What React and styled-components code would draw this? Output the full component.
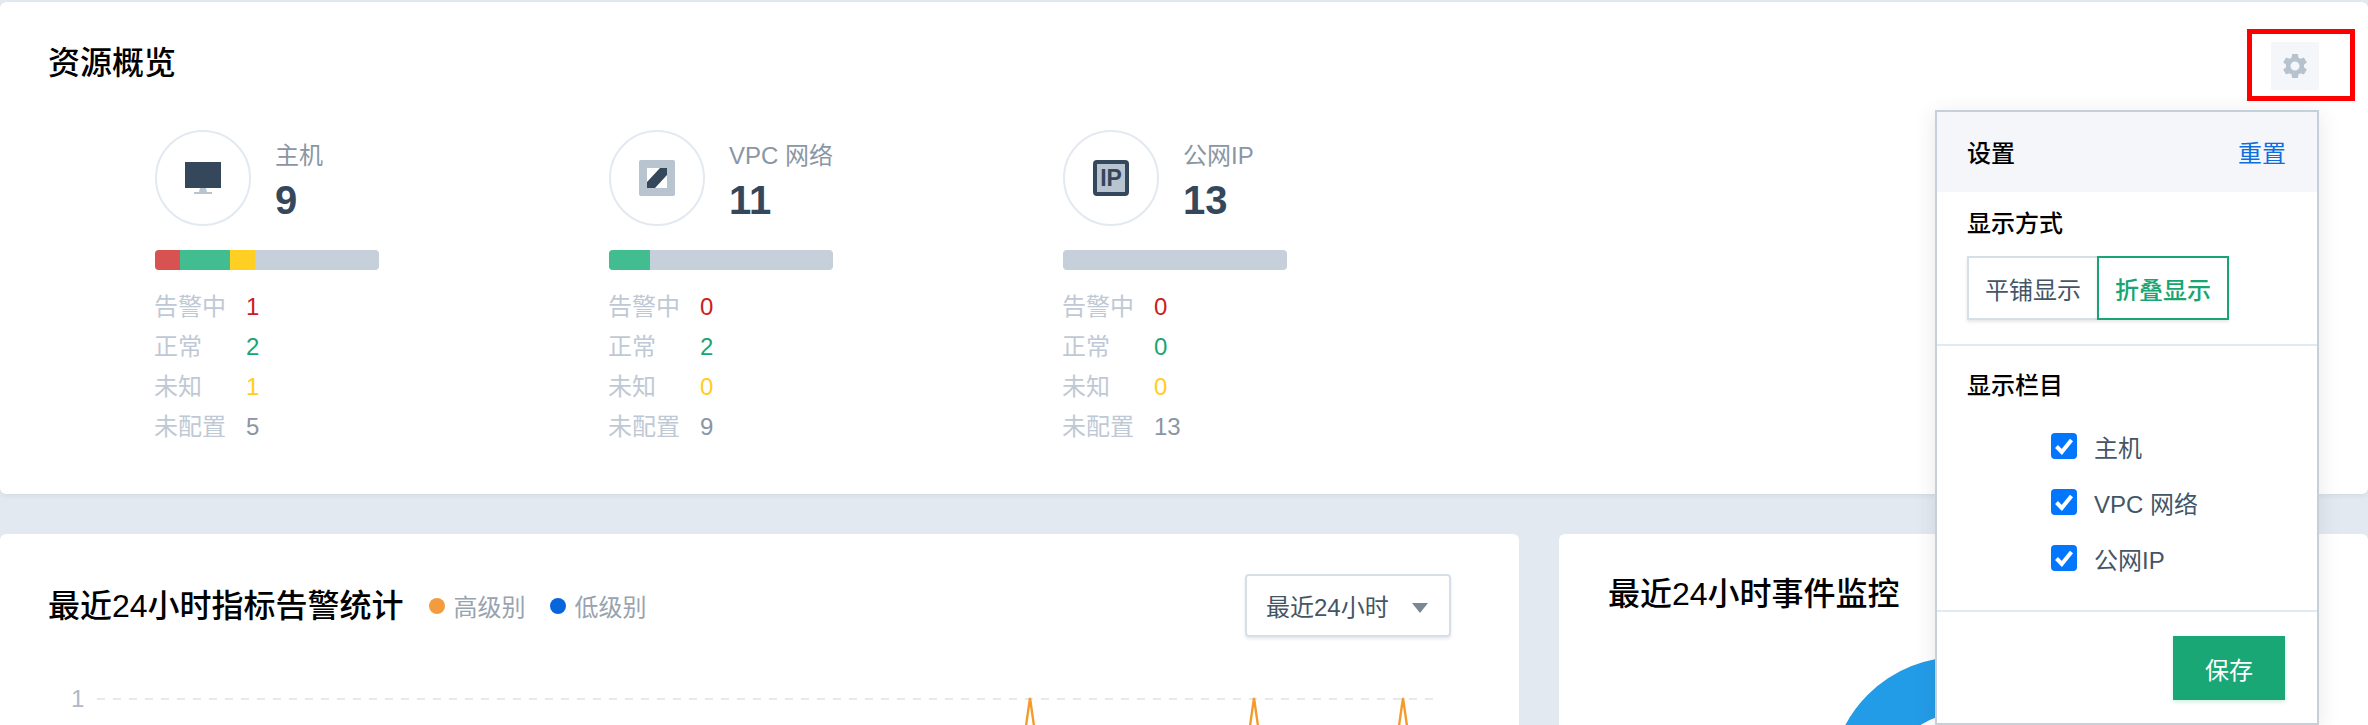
import React from "react";
import styled, { createGlobalStyle } from "styled-components";
import { MdSettings } from "react-icons/md";

const Global = createGlobalStyle`
  html, body { margin: 0; padding: 0; background: #e3e9f1; }
  * { box-sizing: border-box; }
  body { font-family: "Liberation Sans", "Noto Sans CJK SC", sans-serif; overflow: hidden; }
`;

const Page = styled.div`
  position: relative;
  width: 2368px;
  height: 725px;
  padding-top: 2px;
  overflow: hidden;
  background: #e3e9f1;
`;

const OverviewPanel = styled.section`
  height: 492px;
  padding: 0 48px;
  background: #fff;
  border-radius: 6px;
  box-shadow: 0 2px 4px rgba(54, 58, 80, 0.08);
`;

const PanelTitle = styled.h2`
  margin: 0;
  height: 122px;
  display: flex;
  align-items: center;
  font-size: 32px;
  line-height: 40px;
  font-weight: 500;
  color: #000;
`;

const StatRow = styled.div`
  display: flex;
  padding: 6px 0 0 107px;
`;

const StatColumn = styled.div`
  width: 454px;
`;

const StatHead = styled.div`
  display: flex;
  gap: 24px;
`;

const IconCircle = styled.div`
  width: 96px;
  height: 96px;
  border: 2px solid #e3e9f1;
  border-radius: 50%;
  display: flex;
  align-items: center;
  justify-content: center;
`;

const StatText = styled.div`
  padding-top: 12px;
`;

const StatName = styled.div`
  font-size: 24px;
  line-height: 28px;
  color: #8a96a3;
`;

const StatCount = styled.div`
  margin-top: 8px;
  font-size: 40px;
  line-height: 44px;
  font-weight: 700;
  color: #34475b;
`;

const Bar = styled.div`
  display: flex;
  width: 224px;
  height: 20px;
  margin-top: 24px;
  background: #c5d0db;
  border-radius: 4px;
  overflow: hidden;
`;

const BarPart = styled.div`
  height: 100%;
  background: ${(p) => p.$color};
`;

const StatList = styled.dl`
  margin: 15px 0 0;
`;

const StatLine = styled.div`
  display: flex;
  height: 40px;
  align-items: center;
  font-size: 24px;
`;

const StatLabel = styled.dt`
  width: 92px;
  margin: -2px 0 0 -1px;
  color: #bfc9d5;
`;

const StatValue = styled.dd`
  margin: 3px 0 0;
  color: ${(p) => p.$color};
`;

const BottomRow = styled.div`
  display: grid;
  grid-template-columns: 1519px 809px;
  gap: 40px;
  margin-top: 40px;
`;

const Card = styled.section`
  height: 400px;
  background: #fff;
  border-radius: 6px;
  overflow: hidden;
`;

const CardHead = styled.div`
  display: flex;
  align-items: center;
  height: 63px;
  margin: 40px 68px 0 48px;
`;

const CardTitle = styled.h3`
  margin: 0;
  font-size: 32px;
  line-height: 40px;
  font-weight: 500;
  color: #000;
`;

const Legend = styled.div`
  display: flex;
  align-items: center;
  margin-left: 25px;
  font-size: 24px;
  color: #98a3b0;
`;

const LegendItem = styled.span`
  display: flex;
  align-items: center;
  gap: 9px;
  margin-right: 24px;
`;

const Dot = styled.i`
  width: 16px;
  height: 16px;
  border-radius: 50%;
  background: ${(p) => p.$color};
`;

const Select = styled.div`
  display: flex;
  align-items: center;
  justify-content: space-between;
  width: 206px;
  height: 63px;
  margin-left: auto;
  padding: 0 21px 0 19px;
  font-size: 24px;
  color: #445566;
  border: 2px solid #d5dfe8;
  border-radius: 4px;
  box-shadow: 0 2px 3px rgba(54, 58, 80, 0.12);
`;

const Caret = styled.i`
  width: 0;
  height: 0;
  border-left: 8px solid transparent;
  border-right: 8px solid transparent;
  border-top: 10px solid #7b8794;
  margin-top: 4px;
`;

const ChartSvg = styled.svg`
  display: block;
  margin-top: 40px;
`;

const EventTitle = styled(CardTitle)`
  margin: 40px 0 0 49px;
`;

const DonutSvg = styled.svg`
  display: block;
  margin: 43px 0 0 271px;
`;

const GearButton = styled.button`
  position: absolute;
  left: 2271px;
  top: 42px;
  width: 48px;
  height: 48px;
  padding: 0;
  border: 0;
  background: #f4f6f9;
  color: #b6c2ce;
  display: flex;
  align-items: center;
  justify-content: center;
`;

const Highlight = styled.div`
  position: absolute;
  left: 2247px;
  top: 29px;
  width: 108px;
  height: 72px;
  border: 5px solid #fe0000;
`;

const Popover = styled.aside`
  position: absolute;
  left: 1935px;
  top: 110px;
  width: 384px;
  height: 615px;
  display: flex;
  flex-direction: column;
  background: #fff;
  border: 2px solid #c5d0db;
  box-shadow: 0 4px 20px rgba(54, 58, 80, 0.12);
`;

const PopHead = styled.div`
  display: flex;
  align-items: center;
  justify-content: space-between;
  flex: none;
  height: 80px;
  padding: 0 31px 2px 30px;
  background: #f4f6fa;
  font-size: 24px;
  font-weight: 500;
  color: #000;
`;

const ResetLink = styled.a`
  color: #0d6fde;
  font-weight: 400;
`;

const PopSection = styled.div`
  height: ${(p) => p.$height}px;
  padding: ${(p) => p.$top}px 30px 0;
  border-bottom: 2px solid #e3e9f1;
`;

const SectionLabel = styled.div`
  font-size: 24px;
  line-height: 40px;
  font-weight: 500;
  color: #000;
`;

const Toggle = styled.div`
  display: flex;
  margin-top: 12px;
`;

const ToggleButton = styled.div`
  width: ${(p) => (p.$active ? 132 : 130)}px;
  height: 64px;
  display: flex;
  align-items: center;
  justify-content: center;
  font-size: 24px;
  font-weight: ${(p) => (p.$active ? 500 : 400)};
  color: ${(p) => (p.$active ? "#17a673" : "#445566")};
  border: 2px solid ${(p) => (p.$active ? "#17a673" : "#d5dfe8")};
  border-right-width: ${(p) => (p.$active ? 2 : 0)}px;
  box-shadow: 0 2px 3px rgba(54, 58, 80, 0.12);
`;

const CheckList = styled.div`
  display: flex;
  flex-direction: column;
  gap: 30px;
  margin: 27px 0 0 84px;
`;

const CheckRow = styled.label`
  display: flex;
  align-items: center;
  gap: 17px;
  height: 26px;
  font-size: 24px;
  color: #445566;
`;

const CheckBox = styled.span`
  width: 26px;
  height: 26px;
  border-radius: 4px;
  background: #0376fe;
  display: flex;
  align-items: center;
  justify-content: center;
`;

const PopFoot = styled.div`
  display: flex;
  justify-content: flex-end;
  padding: 24px 32px 0;
`;

const SaveButton = styled.button`
  width: 112px;
  height: 64px;
  border: 0;
  padding: 0;
  background: #19a776;
  color: #fff;
  font: inherit;
  font-size: 24px;
  box-shadow: 0 2px 4px rgba(25, 167, 118, 0.2);
`;

const C = { red: "#c9201f", green: "#17a673", yellow: "#ffcd21", gray: "#8b95a3" };

const MonitorIcon = () => (
  <svg width="36" height="32" viewBox="0 0 36 32">
    <rect width="36" height="26" fill="#34475b" />
    <path d="M15 26h6l1 4h5v2H9v-2h5z" fill="#b8c4d0" />
  </svg>
);

const VpcIcon = () => (
  <svg width="36" height="36" viewBox="0 0 36 36">
    <rect width="36" height="36" rx="2" fill="#b8c4d0" />
    <rect x="8" y="8" width="20" height="20" fill="#fff" />
    <path d="M8 22 21 8h7v7L16 28H8z" fill="#34475b" />
  </svg>
);

const IpIcon = () => (
  <svg width="36" height="36" viewBox="0 0 36 36">
    <rect x="2" y="2" width="32" height="32" rx="2" fill="#b8c4d0" stroke="#34475b" strokeWidth="4" />
    <text x="18" y="26" textAnchor="middle" fontSize="23" fontWeight="700" fontFamily="Liberation Sans" fill="#34475b">IP</text>
  </svg>
);

const stats = [
  { name: "主机", count: 9, icon: <MonitorIcon />, vals: [1, 2, 1, 5] },
  { name: "VPC 网络", count: 11, icon: <VpcIcon />, vals: [0, 2, 0, 9] },
  { name: "公网IP", count: 13, icon: <IpIcon />, vals: [0, 0, 0, 13] },
];

const lines = [
  ["告警中", C.red],
  ["正常", C.green],
  ["未知", C.yellow],
  ["未配置", C.gray],
];
const partColors = ["#d85252", "#41bd8f", "#ffcf24"];

const peaks = [1030, 1254, 1403];

const Check = () => (
  <svg width="20" height="18" viewBox="0 0 20 18">
    <path d="M2.5 9.5 7.8 15 17.5 3" fill="none" stroke="#fff" strokeWidth="4" />
  </svg>
);

export default function App() {
  return (
    <Page>
      <Global />
      <OverviewPanel>
        <PanelTitle>资源概览</PanelTitle>
        <StatRow>
          {stats.map((s) => (
            <StatColumn key={s.name}>
              <StatHead>
                <IconCircle>{s.icon}</IconCircle>
                <StatText>
                  <StatName>{s.name}</StatName>
                  <StatCount>{s.count}</StatCount>
                </StatText>
              </StatHead>
              <Bar>
                {s.vals.slice(0, 3).map((v, i) => (
                  <BarPart key={i} $color={partColors[i]} style={{ width: `${(v / s.count) * 100}%` }} />
                ))}
              </Bar>
              <StatList>
                {lines.map(([label, color], i) => (
                  <StatLine key={label}>
                    <StatLabel>{label}</StatLabel>
                    <StatValue $color={color}>{s.vals[i]}</StatValue>
                  </StatLine>
                ))}
              </StatList>
            </StatColumn>
          ))}
        </StatRow>
      </OverviewPanel>

      <BottomRow>
        <Card>
          <CardHead>
            <CardTitle>最近24小时指标告警统计</CardTitle>
            <Legend>
              <LegendItem><Dot $color="#f39c3f" />高级别</LegendItem>
              <LegendItem><Dot $color="#0766dc" />低级别</LegendItem>
            </Legend>
            <Select>最近24小时<Caret /></Select>
          </CardHead>
          <ChartSvg width="1519" height="60" viewBox="0 0 1519 60">
            <text x="71" y="30" fontSize="24" fontFamily="Liberation Sans" fill="#aeb9c8">1</text>
            <line x1="97" y1="22" x2="1435" y2="22" stroke="#e3e9f1" strokeWidth="2" strokeDasharray="8 8" />
            {peaks.map((x) => (
              <path key={x} d={`M${x - 40} 300 ${x} 21 ${x + 40} 300`} fill="none" stroke="#f39c2c" strokeWidth="2.4" />
            ))}
          </ChartSvg>
        </Card>
        <Card>
          <EventTitle>最近24小时事件监控</EventTitle>
          <DonutSvg width="258" height="258" viewBox="0 0 258 258">
            <circle cx="129" cy="129" r="100.5" fill="none" stroke="#239ce8" strokeWidth="57" />
          </DonutSvg>
        </Card>
      </BottomRow>

      <Highlight />
      <GearButton aria-label="设置"><MdSettings size={30} /></GearButton>

      <Popover>
        <PopHead>
          <span>设置</span>
          <ResetLink>重置</ResetLink>
        </PopHead>
        <PopSection $height={154} $top={12}>
          <SectionLabel>显示方式</SectionLabel>
          <Toggle>
            <ToggleButton>平铺显示</ToggleButton>
            <ToggleButton $active>折叠显示</ToggleButton>
          </Toggle>
        </PopSection>
        <PopSection $height={266} $top={20}>
          <SectionLabel>显示栏目</SectionLabel>
          <CheckList>
            {stats.map((s) => (
              <CheckRow key={s.name}>
                <CheckBox><Check /></CheckBox>
                {s.name}
              </CheckRow>
            ))}
          </CheckList>
        </PopSection>
        <PopFoot>
          <SaveButton>保存</SaveButton>
        </PopFoot>
      </Popover>
    </Page>
  );
}
